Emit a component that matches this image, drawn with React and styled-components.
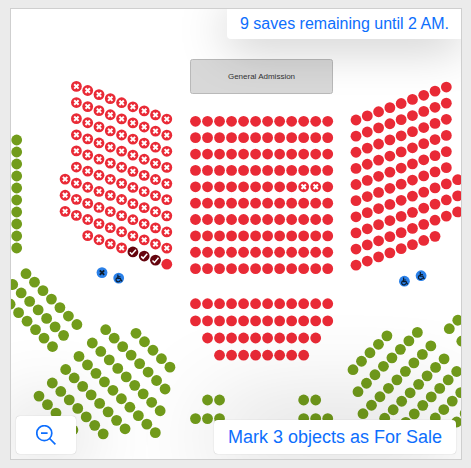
import React from 'react';
import styled, { createGlobalStyle } from 'styled-components';

const GlobalStyle = createGlobalStyle`
  *, *::before, *::after { box-sizing: border-box; }
  body {
    margin: 0;
    background: #ebebeb;
    font-family: "Liberation Sans", Arial, sans-serif;
  }
`;

const Page = styled.main`
  display: flex;
  min-height: 100vh;
  padding: 8px 9px 8px 10px;
`;

const ChartPanel = styled.section`
  position: relative;
  flex: 1;
  overflow: hidden;
  border: 1px solid #cfcfcf;
  background: #fff;
`;

const SeatMap = styled.svg`
  display: block;
  width: 100%;
`;

const Seat = styled.circle`
  fill: ${({ $color }) => $color};
`;

const Mark = styled.path`
  fill: none;
  stroke: ${({ $color }) => $color};
  stroke-width: ${({ $weight }) => $weight};
`;

const AreaShape = styled.rect`
  fill: #d8d8d8;
  stroke: #b9b9b9;
`;

const AreaLabel = styled.text`
  fill: #333;
  font-size: 8px;
  text-anchor: middle;
`;

const Notice = styled.div`
  position: absolute;
  top: 0;
  right: 0;
  padding: 5px 12px 6px 13px;
  border-bottom-left-radius: 4px;
  background: #fff;
  box-shadow: 0 6px 48px rgba(0, 0, 0, 0.26);
  color: #0d6efd;
  font-size: 16px;
  line-height: 19px;
  white-space: nowrap;
`;

const ActionBar = styled.div`
  position: absolute;
  right: 5px;
  bottom: 5px;
  left: 5px;
  display: flex;
  align-items: flex-end;
  justify-content: space-between;
`;

const ActionButton = styled.button`
  display: flex;
  align-items: center;
  justify-content: center;
  height: ${({ $icon }) => ($icon ? 38 : 34)}px;
  padding: ${({ $icon }) => ($icon ? '0 20px' : '0 14px')};
  border: 0;
  border-radius: 4px;
  background: #fff;
  box-shadow: 0 0 1px rgba(0, 0, 0, 0.3), 0 0 ${({ $icon }) => ($icon ? 80 : 100)}px rgba(0, 0, 0, 0.3);
  color: #0d6efd;
  font-family: inherit;
  font-size: 18px;
  line-height: 22px;
  white-space: nowrap;
  cursor: pointer;
`;

const RED = '#e92a36';
const DARK = '#65050e';
const GREEN = '#729c1b';
const BLUE = '#2a80e8';

const CROSS = 'M-2.2 -2.2L2.2 2.2M2.2 -2.2L-2.2 2.2';
const CHECK = 'M-3 0.3L-1 2.3L3 -2.3';
const WHEELCHAIR =
  'M-0.8 -3.6V0.4H1.7L2.7 2.7H3.6M-0.6 -1.2H1.8M-1.4 -0.3A2.1 2.1 0 1 0 1.4 2.2';

const MARKS = {
  cross: { d: CROSS, weight: 2, color: '#fff' },
  check: { d: CHECK, weight: 1.5, color: '#fff' },
  darkCross: { d: CROSS, weight: 1.9, color: '#0b1b2e' },
  wheelchair: { d: WHEELCHAIR, weight: 1.2, color: '#0b1b2e' },
};

const seatRow = (x, y, count, dx, dy, color, markAt = () => null, from = 0) =>
  Array.from({ length: count }, (_, i) => {
    const column = from + i;
    const mark = markAt(column);
    return {
      x: x + column * dx,
      y: y + column * dy,
      color: mark === 'check' ? DARK : color,
      mark,
    };
  });

const range = (n) => Array.from({ length: n }, (_, i) => i);

const leftSection = range(10).flatMap((row) => {
  const from = row === 9 ? 1 : row >= 6 ? -1 : 0;
  return seatRow(76.4, 86.4 + row * 16.13, 9 - from, 11.3, 4.08, RED, (c) => {
    if (row < 9 || c < 5) return 'cross';
    return c < 8 ? 'check' : null;
  }, from);
});

const rightSection = range(10).flatMap((row) => {
  const count = row === 9 ? 8 : row >= 6 ? 10 : 9;
  return seatRow(356, 120 + row * 16.13, count, 11.29, -4.12, RED);
});

const centerSection = range(10).flatMap((row) =>
  seatRow(195.5, 121.3 + row * 16.37, 12, 12.02, 0, RED, (c) =>
    row === 4 && (c === 9 || c === 10) ? 'cross' : null
  )
);

const centerRows = [
  [0, 12, 303.7, RED],
  [0, 12, 320.9, RED],
  [1, 10, 338, RED],
  [2, 8, 355.2, RED],
  [1, 2, 400, GREEN],
  [9, 2, 400, GREEN],
  [0, 3, 418.6, GREEN],
  [9, 3, 418.6, GREEN],
].flatMap(([from, count, y, color]) =>
  seatRow(195.5, y, count, 12.02, 0, color, undefined, from)
);

const sideColumn = seatRow(16.7, 140, 10, 0, 12, GREEN);

const descendingRows = [
  [26, 273.7, 7],
  [12.7, 284.5, 7],
  [10.1, 304.2, 6],
  [136, 333.3, 5],
  [105.7, 329.7, 8],
  [92.3, 343, 9],
  [79, 356.4, 10],
  [65.7, 369.5, 8],
  [52.3, 383, 7],
  [39, 396.1, 5],
].flatMap(([x, y, count]) => seatRow(x, y, count, 8.48, 8.47, GREEN));

const ascendingRows = [
  [353, 369.7, 5],
  [358, 391.7, 8],
  [363, 413.7, 9],
  [384.7, 418.2, 8],
  [405.8, 422.3, 7],
  [435.3, 418, 4],
  [456.7, 422, 2],
  [449.3, 328.7, 2],
  [461.8, 341.2, 1],
].flatMap(([x, y, count]) => seatRow(x, y, count, 8.48, -8.47, GREEN));

const accessibleSeats = [
  { x: 102, y: 272.6, color: BLUE, mark: 'darkCross' },
  { x: 118.7, y: 278.1, color: BLUE, mark: 'wheelchair' },
  { x: 404.4, y: 281.2, color: BLUE, mark: 'wheelchair' },
  { x: 421.1, y: 275.7, color: BLUE, mark: 'wheelchair' },
];

const seats = [
  ...sideColumn,
  ...leftSection,
  ...centerSection,
  ...centerRows,
  ...rightSection,
  ...descendingRows,
  ...ascendingRows,
  ...accessibleSeats,
];

function SeatGlyph({ x, y, color, mark }) {
  const glyph = MARKS[mark];
  return (
    <g transform={`translate(${x} ${y})`}>
      <Seat r="5.4" $color={color} />
      {glyph && <Mark d={glyph.d} $color={glyph.color} $weight={glyph.weight} />}
    </g>
  );
}

function ZoomOutIcon() {
  return (
    <svg width="20" height="20" viewBox="0 0 20 20" fill="none" stroke="currentColor" strokeWidth="1.7" aria-hidden="true">
      <circle cx="8.3" cy="8.2" r="7.5" />
      <path d="M5 8.2H11.6M13.6 13.5L19.4 19.3" />
    </svg>
  );
}

export default function App() {
  return (
    <>
      <GlobalStyle />
      <Page>
        <ChartPanel aria-label="Seating chart">
          <SeatMap viewBox="11 9 450 450">
            <AreaShape x="190.5" y="59.5" width="142" height="34" rx="2" />
            <AreaLabel x="261.5" y="79">General Admission</AreaLabel>
            {seats.map((seat, index) => (
              <SeatGlyph key={index} {...seat} />
            ))}
          </SeatMap>
          <Notice role="status">9 saves remaining until 2 AM.</Notice>
          <ActionBar>
            <ActionButton type="button" $icon aria-label="Zoom out">
              <ZoomOutIcon />
            </ActionButton>
            <ActionButton type="button">Mark 3 objects as For Sale</ActionButton>
          </ActionBar>
        </ChartPanel>
      </Page>
    </>
  );
}
